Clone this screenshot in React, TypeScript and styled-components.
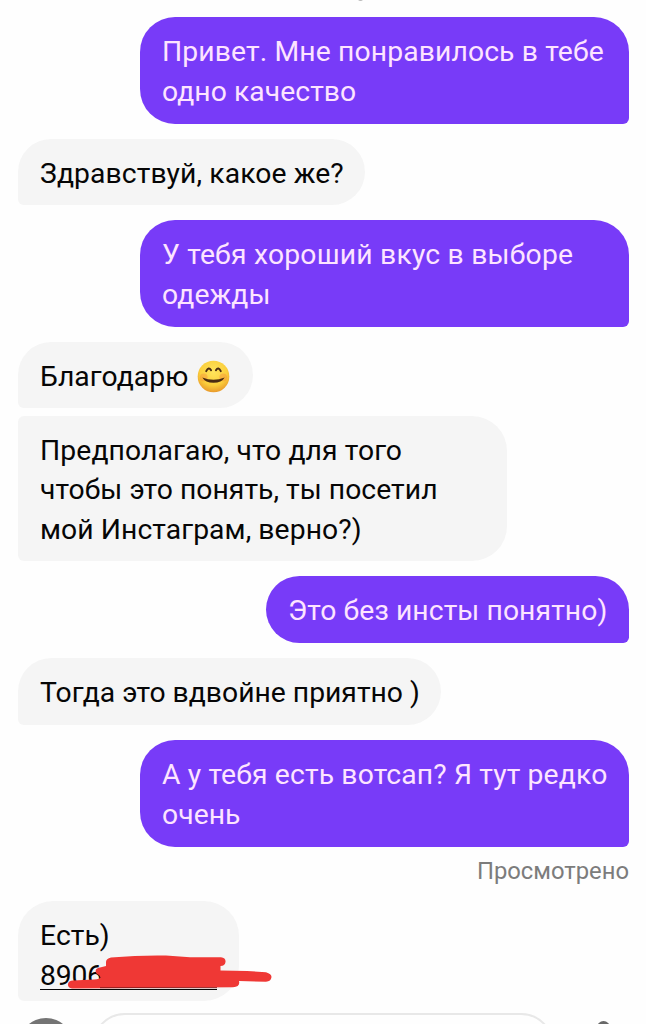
import React from "react";
import styled, { createGlobalStyle } from "styled-components";

const GlobalStyle = createGlobalStyle`
  *, *::before, *::after { box-sizing: border-box; }
  body { margin: 0; background: #fefefe; font-family: Roboto, "Liberation Sans", sans-serif; }
`;

const Screen = styled.main`
  position: relative;
  display: flex;
  flex-direction: column;
  width: 646px;
  height: 1024px;
  padding: 17px 17px 0 18px;
  overflow: hidden;
  background: #fefefe;
`;

const Bubble = styled.div<{
  $own?: boolean;
  $width: number;
  $gap?: number;
  $joined?: boolean;
  $bottom?: number;
}>`
  position: relative;
  flex: none;
  align-self: ${(p) => (p.$own ? "flex-end" : "flex-start")};
  width: ${(p) => p.$width}px;
  margin-top: ${(p) => p.$gap ?? 0}px;
  padding: 15px 0 ${(p) => p.$bottom ?? 12}px 22px;
  border-radius: ${(p) =>
    p.$own ? "35px 35px 6px 35px" : p.$joined ? "6px 35px 35px 6px" : "35px 35px 35px 6px"};
  background: ${(p) => (p.$own ? "#783bf8" : "#f5f5f5")};
  color: ${(p) => (p.$own ? "#fde4ff" : "#060606")};
`;

const Line = styled.p<{ $spacing?: number }>`
  display: flex;
  align-items: center;
  height: 39.75px;
  margin: 0;
  font-size: 28.3px;
  line-height: 39.75px;
  letter-spacing: ${(p) => p.$spacing ?? 0.06}px;
  white-space: pre;
`;

const Phone = styled.span`
  width: 177px;
  height: 29px;
  border-bottom: 1.5px solid #060606;
  line-height: 29.5px;
  letter-spacing: -0.2px;
`;

const Seen = styled.p`
  flex: none;
  align-self: flex-end;
  height: 30px;
  margin: 9px 0 15px;
  color: #7c7c7c;
  font-size: 23.8px;
  line-height: 30px;
`;

const Smile = styled.svg`
  width: 33px;
  height: 33px;
  margin: -1px 0 0 9px;
`;

const Scribble = styled.svg`
  position: absolute;
  left: 42px;
  top: 50px;
  width: 220px;
  height: 44px;
`;

const Composer = styled.footer`
  display: flex;
  flex: none;
  height: 11px;
  margin: 12px 0 0 1px;
`;

const CameraButton = styled.span`
  flex: none;
  width: 54px;
  height: 54px;
  margin-top: 5px;
  border-radius: 50%;
  background: #747474;
`;

const Field = styled.span`
  flex: none;
  width: 462px;
  height: 66px;
  margin-left: 19px;
  border: 2px solid #e8e8e8;
  border-radius: 33px;
`;

const Mic = styled.span`
  flex: none;
  width: 13px;
  height: 24px;
  margin: 8px 0 0 43px;
  border-radius: 7px;
  background: #686868;
`;

const Speck = styled.span`
  position: absolute;
  left: 358px;
  top: -3px;
  width: 5px;
  height: 4px;
  border-radius: 50%;
  background: #bbb;
`;

export default function App() {
  return (
    <>
      <GlobalStyle />
      <Screen>
        <Speck />
        <Bubble $own $width={489}>
          <Line $spacing={0.12}>Привет. Мне понравилось в тебе</Line>
          <Line>одно качество</Line>
        </Bubble>
        <Bubble $width={347} $gap={15}>
          <Line $spacing={0.1}>Здравствуй, какое же?</Line>
        </Bubble>
        <Bubble $own $width={489} $gap={15}>
          <Line $spacing={0.2}>У тебя хороший вкус в выборе</Line>
          <Line $spacing={0.1}>одежды</Line>
        </Bubble>
        <Bubble $width={235} $gap={15} $bottom={11.5}>
          <Line>
            Благодарю
            <Smile viewBox="0 0 34 34">
              <defs>
                <radialGradient id="face" cx="50%" cy="35%" r="65%">
                  <stop offset="0" stopColor="#ffe45c" />
                  <stop offset="0.65" stopColor="#fbcf3c" />
                  <stop offset="1" stopColor="#e99a2b" />
                </radialGradient>
              </defs>
              <circle cx="17" cy="17" r="16.3" fill="url(#face)" />
              <circle cx="7" cy="18" r="4" fill="#f58a3a" opacity="0.4" />
              <circle cx="27" cy="18" r="4" fill="#f58a3a" opacity="0.4" />
              <path
                d="M9.500 11.500Q12 6.500 14.500 10.500M19.500 10.500Q22 6.500 24.500 11.500"
                fill="none"
                stroke="#4a2b12"
                strokeWidth="2"
                strokeLinecap="round"
              />
              <path d="M5.500 18Q17 22.500 28.500 18Q25.500 23.500 17 23.500Q8.500 23.500 5.500 18Z" fill="#4a2b12" />
            </Smile>
          </Line>
        </Bubble>
        <Bubble $width={489} $gap={7.5} $bottom={11.25} $joined>
          <Line $spacing={0.1}>Предполагаю, что для того</Line>
          <Line $spacing={0.04}>чтобы это понять, ты посетил</Line>
          <Line $spacing={0.07}>мой Инстаграм, верно?)</Line>
        </Bubble>
        <Bubble $own $width={363} $gap={15.25}>
          <Line $spacing={0.08}>Это без инсты понятно)</Line>
        </Bubble>
        <Bubble $width={423} $gap={15.25}>
          <Line $spacing={0}>Тогда это вдвойне приятно )</Line>
        </Bubble>
        <Bubble $own $width={489} $gap={15}>
          <Line $spacing={0.14}>А у тебя есть вотсап? Я тут редко</Line>
          <Line>очень</Line>
        </Bubble>
        <Seen>Просмотрено</Seen>
        <Bubble $width={221} $bottom={6}>
          <Line>Есть)</Line>
          <Line>
            <Phone>8906</Phone>
          </Line>
          <Scribble viewBox="60 951 220 44">
            <path
              d="M106 962Q106 958.500 111 957.500Q140 955 166 955.500L190 957.300L221 957.300Q226 958 225.500 962Q225 966 220.500 966V970.500L247 971L266 972.300Q271.500 974 271.500 977Q271 981.500 266 981.700L239 981Q240.500 987 233 987.300L72 988.500Q67.500 987.500 68 984Q68.500 980.500 73 980.500L94 979.500Q100 979 100.500 977.500Q100 975 96.500 973.500Q94 970 98 968L106 966Z"
              fill="#ef3835"
            />
            <path d="M100 987.700H217" stroke="#8b1c1c" strokeWidth="1" />
          </Scribble>
        </Bubble>
        <Composer>
          <CameraButton />
          <Field />
          <Mic />
        </Composer>
      </Screen>
    </>
  );
}
